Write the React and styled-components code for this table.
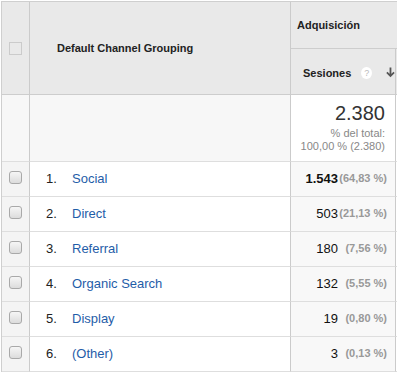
import React from "react";
import styled, { createGlobalStyle } from "styled-components";

const Global = createGlobalStyle`
  html, body { margin: 0; padding: 0; background: #fff; overflow: hidden; }
  body { font-family: "Liberation Sans", Arial, sans-serif; }
`;

const Grid = styled.div`
  margin: 1px 0 0 1px;
  display: grid;
  grid-template-columns: 28px 261px 105px 2px;
  grid-template-rows: 47px 46px 67px repeat(6, 35px);
  border-left: 1px solid #cfcfcf;
  border-top: 1px solid #cfcfcf;
  width: max-content;
`;

const Cell = styled.div`
  box-sizing: border-box;
  border-right: 1px solid ${(p) => (p.$noRight ? "transparent" : "#cbcbcb")};
  border-bottom: 1px solid ${(p) => p.$bottom || "#dedede"};
  background: ${(p) => p.$bg || "#fff"};
  display: flex;
  align-items: center;
  min-width: 0;
  overflow: hidden;
`;

const HeadCell = styled(Cell).attrs({ $bg: "#e9e9e9", $bottom: "#cdcdcd" })`
  font-size: 11px;
  font-weight: bold;
  color: #222;
  white-space: nowrap;
`;

const CheckCol = styled(HeadCell)`
  grid-row: 1 / 3;
  justify-content: center;
`;

const DimHead = styled(HeadCell)`
  grid-row: 1 / 3;
  padding-left: 27px;
`;

const GroupHead = styled(HeadCell)`
  grid-column: 3 / 5;
  padding-left: 6px;
  border-right: none;
  overflow: visible;
`;

const MetricHead = styled(HeadCell)`
  padding-left: 12px;
  padding-top: 3px;
`;

const EmptyHead = styled(HeadCell)`
  border-right: none;
`;

const HeadBox = styled.span`
  width: 11px;
  height: 11px;
  border: 1px solid #cbcbcb;
  margin-top: 1px;
`;

const Help = styled.span`
  width: 12px;
  height: 12px;
  border-radius: 50%;
  background: #fff;
  color: #bbb;
  font-size: 9px;
  font-weight: normal;
  display: inline-flex;
  align-items: center;
  justify-content: center;
  margin-left: 10px;
`;

const SortArrow = styled.svg`
  margin-left: 14px;
  margin-top: -3px;
`;

const SummaryCheck = styled(Cell).attrs({ $bg: "#f7f7f7" })``;
const SummaryDim = styled(Cell).attrs({ $bg: "#f7f7f7" })``;

const SummaryMetric = styled(Cell)`
  flex-direction: column;
  align-items: flex-end;
  justify-content: flex-start;
  padding: 7px 10px 0 0;
`;

const SummaryRest = styled(Cell).attrs({ $noRight: true })``;

const Total = styled.div`
  font-size: 20px;
  line-height: 23px;
  color: #333;
  margin-bottom: 2px;
`;

const TotalNote = styled.div`
  font-size: 11px;
  line-height: 13px;
  color: #888;
  text-align: right;
`;

const RowCheck = styled(Cell).attrs({ $bg: "#f4f4f4" })`
  justify-content: center;
  padding-bottom: 3px;
`;

const Box = styled.span`
  box-sizing: border-box;
  width: 13px;
  height: 13px;
  border: 1px solid #a9a9a9;
  border-radius: 3px;
  background: linear-gradient(#f6f6f6, #dcdcdc);
`;

const RowDim = styled(Cell)`
  padding: 0 0 2px 16px;
  font-size: 13px;
  white-space: nowrap;
`;

const Rank = styled.span`
  width: 26px;
  color: #222;
`;

const Label = styled.span`
  color: #1f5da8;
`;

const RowMetric = styled(Cell).attrs({ $bg: "#f8f8f8" })`
  justify-content: flex-end;
  padding: 0 8px 2px 0;
  white-space: nowrap;
`;

const Value = styled.span`
  font-size: 13px;
  color: #111;
  font-weight: ${(p) => (p.$strong ? "bold" : "normal")};
`;

const Pct = styled.span`
  width: 49px;
  text-align: right;
  font-size: 11px;
  font-weight: bold;
  color: #999;
`;

const RowRest = styled(Cell).attrs({ $noRight: true })``;

const rows = [
  { label: "Social", value: "1.543", pct: "(64,83 %)", strong: true },
  { label: "Direct", value: "503", pct: "(21,13 %)" },
  { label: "Referral", value: "180", pct: "(7,56 %)" },
  { label: "Organic Search", value: "132", pct: "(5,55 %)" },
  { label: "Display", value: "19", pct: "(0,80 %)" },
  { label: "(Other)", value: "3", pct: "(0,13 %)" },
];

export default function App() {
  return (
    <>
      <Global />
      <Grid>
        <CheckCol>
          <HeadBox />
        </CheckCol>
        <DimHead>Default Channel Grouping</DimHead>
        <GroupHead>Adquisición</GroupHead>
        <MetricHead>
          Sesiones
          <Help>?</Help>
          <SortArrow width="10" height="12" viewBox="0 0 10 12">
            <path
              d="M5 1 V10 M1 6.5 L5 10.5 L9 6.5"
              stroke="#555"
              strokeWidth="2"
              fill="none"
            />
          </SortArrow>
        </MetricHead>
        <EmptyHead />

        <SummaryCheck />
        <SummaryDim />
        <SummaryMetric>
          <Total>2.380</Total>
          <TotalNote>% del total:</TotalNote>
          <TotalNote>100,00 % (2.380)</TotalNote>
        </SummaryMetric>
        <SummaryRest />

        {rows.map((r, i) => (
          <React.Fragment key={r.label}>
            <RowCheck>
              <Box />
            </RowCheck>
            <RowDim>
              <Rank>{i + 1}.</Rank>
              <Label>{r.label}</Label>
            </RowDim>
            <RowMetric>
              <Value $strong={r.strong}>{r.value}</Value>
              <Pct>{r.pct}</Pct>
            </RowMetric>
            <RowRest />
          </React.Fragment>
        ))}
      </Grid>
    </>
  );
}
